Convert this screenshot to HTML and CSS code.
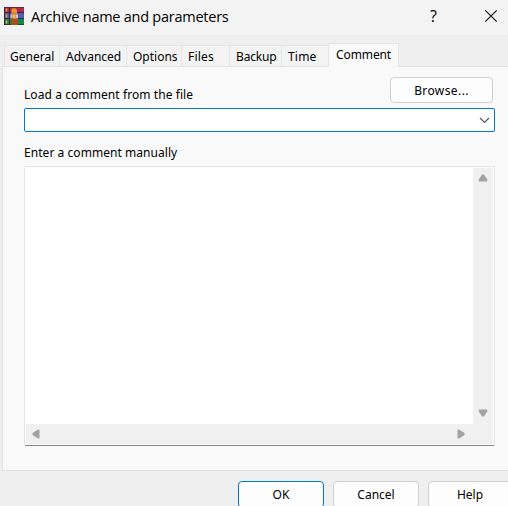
FILE: index.html
```
<!DOCTYPE html>
<html lang="en">
<head>
<meta charset="utf-8">
<title>Archive name and parameters</title>
<link rel="stylesheet" href="styles.css">
</head>
<body>
<div class="dialog">
  <header class="titlebar">
    <svg class="logo" width="20" height="18" viewBox="0 0 20 18">
      <rect width="20" height="6" fill="#b02950"/><rect y="0" width="20" height="1" fill="#74233a"/><rect y="5" width="20" height="1" fill="#4b1a35"/>
      <rect y="6" width="20" height="6" fill="#5a5ab2"/><rect y="11" width="20" height="1" fill="#24304f"/>
      <rect y="12" width="20" height="6" fill="#168a48"/><rect y="17" width="20" height="1" fill="#0c4d2c"/>
      <path d="M0 0h1v18H0zM5 0h1v18H5z" fill="#402638"/>
      <path d="M2.500 1.500v3M2.500 7.500v3M2.500 13.500v3" stroke="#f0ad1d" stroke-width="1.4"/>
      <rect x="7" y="12" width="7" height="6" fill="#a4501f"/>
      <path d="M8 1.500h4l1 2v4H7.500V3z" fill="#ed9a24"/>
      <path d="M6.500 7.500h2v4h-2zM12 7.500h2v4h-2z" fill="#d5c5bd"/>
      <path d="M8.500 5h3.500v7H8.500z" fill="#e4862b"/><path d="M9.500 8h1.500v2.500H9.500z" fill="#fff0d0"/>
    </svg>
    <h1 class="title">Archive name and parameters</h1>
    <span class="help-mark">?</span>
    <svg class="close" width="14" height="14" viewBox="0 0 14 14"><path d="M1.300 1.300l11.400 11.400M12.700 1.300L1.300 12.700" stroke="#111" stroke-width="1.2"/></svg>
  </header>
  <nav class="tabs">
    <span class="tab general">General</span><span class="tab advanced">Advanced</span><span class="tab options">Options</span><span class="tab files">Files</span><span class="tab backup">Backup</span><span class="tab time">Time</span><span class="tab comment">Comment</span>
  </nav>
  <main class="panel">
    <div class="load-row"><label class="load-label">Load a comment from the file</label><button class="button browse"><span>Browse...</span></button></div>
    <div class="combo"><svg width="11" height="7" viewBox="0 0 11 7"><path d="M1 1l4.500 4.500L10 1" fill="none" stroke="#555" stroke-width="1.1"/></svg></div>
    <label class="manual-label">Enter a comment manually</label>
    <div class="editor">
      <div class="canvas"></div>
      <div class="vbar">
        <svg width="10" height="8" viewBox="0 0 10 8"><path d="M4 .5h2L9.500 6 9 7.500H1L.5 6z" fill="#a3a3a3"/></svg>
        <svg width="10" height="8" viewBox="0 0 10 8"><path d="M4 7.500h2L9.500 2 9 .5H1L.5 2z" fill="#a3a3a3"/></svg>
      </div>
      <div class="hbar">
        <svg width="8" height="10" viewBox="0 0 8 10"><path d="M.5 4v2L6 9.500l1.500-.3V.8L6 .5z" fill="#a3a3a3"/></svg>
        <svg width="8" height="10" viewBox="0 0 8 10"><path d="M7.500 4v2L2 9.500.5 9.200V.8L2 .5z" fill="#a3a3a3"/></svg>
      </div>
    </div>
  </main>
  <footer class="actions"><button class="button ok"><span>OK</span></button><button class="button"><span>Cancel</span></button><button class="button help"><span>Help</span></button></footer>
</div>
</body>
</html>
```
FILE: styles.css
```
* { box-sizing: border-box; }
body { margin: 0; overflow: hidden; }
.dialog { width: 508px; height: 506px; overflow: hidden; background: #efefef; color: #000; font: 12px/16px "Noto Sans", sans-serif; }
.titlebar { display: flex; align-items: center; height: 35px; padding: 0 10px 3px 4px; background: #f3f3f3; }
.logo { margin-right: 7px; }
.title { margin: 0; flex: 1; padding-top: 2px; font: 400 14.5px/20px "Open Sans", sans-serif; letter-spacing: -.25px; white-space: nowrap; }
.help-mark { margin-right: 47px; font: 16px/20px "Open Sans", sans-serif; }
.tabs { display: flex; align-items: flex-end; height: 32px; padding-left: 2px; border-bottom: 1px solid #e3e3e3; margin-left: 2px; }
.tab { height: 21px; padding: 3px 0 0 5px; border: 1px solid #e5e5e5; border-width: 1px 0 0 1px; background: #f3f3f3; white-space: nowrap; }
.general { width: 55px; }
.advanced { width: 67px; padding-left: 6px; }
.options { width: 55px; padding-left: 6px; }
.files { width: 48px; padding-left: 6px; letter-spacing: .2px; }
.backup { width: 52px; padding-left: 6px; letter-spacing: -.15px; }
.time { width: 47px; padding-left: 6px; letter-spacing: .2px; }
.comment { width: 71px; height: 24px; margin-bottom: -1px; padding-left: 7px; border-right-width: 1px; background: #f9f9f9; letter-spacing: -.1px; }
.panel { height: 404px; margin-left: 2px; padding: 10px 0 0 21px; border: 1px solid #e3e3e3; border-width: 0 0 1px 1px; background: #f9f9f9; }
.load-row { display: flex; width: 469px; height: 31px; justify-content: space-between; }
.load-label { padding-top: 10px; letter-spacing: .08px; }
.button { display: block; padding: 0; border: 1px solid #d0d0d0; border-radius: 4px; background: #fdfdfd; font: inherit; color: inherit; }
.browse { width: 103px; height: 26px; padding-top: 2px; letter-spacing: .4px; }
.combo { display: flex; align-items: center; justify-content: flex-end; width: 471px; height: 24px; padding-right: 4px; border: 1px solid #0078d4; border-radius: 2px; background: #fff; }
.manual-label { display: block; height: 34px; padding-top: 13px; letter-spacing: .05px; }
.editor { display: grid; grid-template: 256px 20px / 447px 20px; width: 471px; height: 280px; padding: 1px; border: 1px solid #e5e5e5; border-bottom-color: #868686; border-radius: 2px; background: #fff; }
.vbar, .hbar { display: flex; justify-content: space-between; align-items: center; background: #f0f0f0; }
.vbar { flex-direction: column; padding: 6px 1px 7px 0; }
.hbar { grid-column: 1 / 3; padding: 0 28px 1px 6px; }
.actions { display: flex; gap: 9px; padding: 10px 0 0 238px; }
.actions .button { flex: 0 0 86px; height: 27px; }
.actions .ok { border-color: #0078d4; }
.actions .help { padding-right: 2px; }
```
